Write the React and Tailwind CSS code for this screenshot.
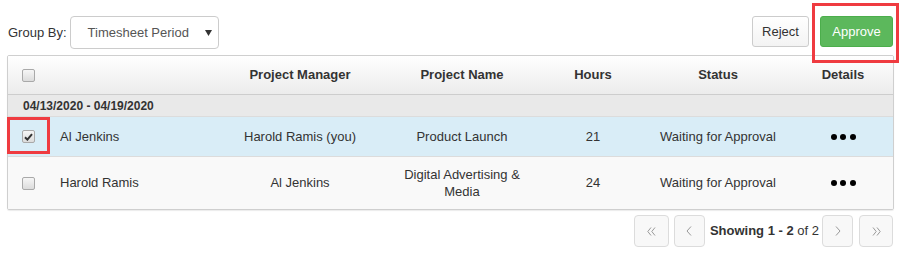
import React from "react";

function Box({ checked }) {
  return (
    <div className="w-[13px] h-[13px] rounded-[2px] border border-[#a9a9a9] bg-gradient-to-b from-[#f6f6f6] to-[#dcdcdc] flex items-center justify-center">
      {checked && (
        <svg width="9" height="8" viewBox="0 0 9 8">
          <path d="M1 4.2 L3.4 6.6 L8 1.2" fill="none" stroke="#333" strokeWidth="2" />
        </svg>
      )}
    </div>
  );
}

function Dots() {
  return (
    <div className="flex gap-[3.5px]">
      <div className="w-[6px] h-[6px] rounded-full bg-black" />
      <div className="w-[6px] h-[6px] rounded-full bg-black" />
      <div className="w-[6px] h-[6px] rounded-full bg-black" />
    </div>
  );
}

function PageBtn({ w, children }) {
  return (
    <div className={`${w} h-[32px] rounded-[4px] border border-[#dcdcdc] bg-[#f8f8f8] flex items-center justify-center`}>
      {children}
    </div>
  );
}

const cols = "grid grid-cols-[40px_171px_162px_162px_100px_150px_100px]";

export default function App() {
  return (
    <div className="relative w-[906px] h-[259px] bg-white text-[13px] text-[#333] font-['Liberation_Sans',Arial,sans-serif]">
      {/* top bar */}
      <div className="flex items-start justify-between pl-[8px] pr-[13px] pt-[16px]">
        <div className="flex items-center">
          <span className="mr-[3px]">Group By:</span>
          <div className="w-[149px] h-[33px] rounded-[4px] border border-[#ccc] bg-white flex items-center pl-[17px] pr-[6px] text-[#555]">
            <span className="flex-1">Timesheet Period</span>
            <svg width="7" height="6" viewBox="0 0 7 6">
              <path d="M0 0 H7 L3.5 6 Z" fill="#333" />
            </svg>
          </div>
        </div>
        <div className="flex items-center gap-[11px]">
          <div className="w-[57px] h-[31px] rounded-[3px] border border-[#ccc] bg-gradient-to-b from-white to-[#f3f3f3] flex items-center justify-center">
            Reject
          </div>
          <div className="w-[73px] h-[31px] rounded-[3px] border border-[#4cae4c] bg-[#5cb85c] text-white flex items-center justify-center">
            Approve
          </div>
        </div>
      </div>

      {/* table */}
      <div className="ml-[7px] mt-[6px] w-[887px] border border-[#cfcfcf] rounded-[2px] shadow-[0_1px_1px_rgba(0,0,0,0.08)] overflow-hidden">
        <div className={`${cols} h-[39px] items-center border-b border-[#cdcdcd] bg-gradient-to-b from-white to-[#ececec] font-bold`}>
          <div className="flex justify-center pl-[1px]"><Box /></div>
          <div />
          <div className="text-center">Project Manager</div>
          <div className="text-center">Project Name</div>
          <div className="text-center">Hours</div>
          <div className="text-center">Status</div>
          <div className="text-center">Details</div>
        </div>
        <div className="h-[22px] flex items-center pl-[15px] bg-[#e9e9e9] border-b border-[#dcdcdc] font-bold text-[12px]">
          04/13/2020 - 04/19/2020
        </div>
        <div className={`${cols} h-[40px] items-center bg-[#d9edf7] border-b border-[#dcdcdc]`}>
          <div className="flex justify-center pl-[1px]"><Box checked /></div>
          <div className="pl-[12px]">Al Jenkins</div>
          <div className="text-center">Harold Ramis (you)</div>
          <div className="text-center">Product Launch</div>
          <div className="text-center">21</div>
          <div className="text-center">Waiting for Approval</div>
          <div className="flex justify-center"><Dots /></div>
        </div>
        <div className={`${cols} h-[52px] items-center bg-[#f9f9f9]`}>
          <div className="flex justify-center pl-[1px]"><Box /></div>
          <div className="pl-[12px]">Harold Ramis</div>
          <div className="text-center">Al Jenkins</div>
          <div className="text-center leading-[17px]">Digital Advertising &amp;<br />Media</div>
          <div className="text-center">24</div>
          <div className="text-center">Waiting for Approval</div>
          <div className="flex justify-center"><Dots /></div>
        </div>
      </div>

      {/* pagination */}
      <div className="flex items-center justify-end pr-[13px] mt-[5px]">
        <PageBtn w="w-[35px]">
          <svg width="9" height="9" viewBox="0 0 9 9">
            <path d="M4 0.5 L0.8 4.5 L4 8.5 M8 0.5 L4.8 4.5 L8 8.5" fill="none" stroke="#999" strokeWidth="1" />
          </svg>
        </PageBtn>
        <div className="w-[5px]" />
        <PageBtn w="w-[31px]">
          <svg width="6" height="10" viewBox="0 0 6 10">
            <path d="M5 0.5 L1 5 L5 9.5" fill="none" stroke="#999" strokeWidth="1" />
          </svg>
        </PageBtn>
        <div className="ml-[5px] mr-[3px]">
          <span className="font-bold">Showing 1 - 2</span> of 2
        </div>
        <PageBtn w="w-[31px]">
          <svg width="6" height="10" viewBox="0 0 6 10">
            <path d="M1 0.5 L5 5 L1 9.5" fill="none" stroke="#999" strokeWidth="1" />
          </svg>
        </PageBtn>
        <div className="w-[6px]" />
        <PageBtn w="w-[34px]">
          <svg width="9" height="9" viewBox="0 0 9 9">
            <path d="M1 0.5 L4.2 4.5 L1 8.5 M5 0.5 L8.2 4.5 L5 8.5" fill="none" stroke="#999" strokeWidth="1" />
          </svg>
        </PageBtn>
      </div>

      {/* annotation highlights */}
      <div className="absolute left-[812px] top-[3px] w-[87px] h-[60px] border-[3px] border-[#ef3b40]" />
      <div className="absolute left-[7px] top-[117px] w-[43px] h-[37px] border-[3px] border-[#ef3b40]" />
    </div>
  );
}
